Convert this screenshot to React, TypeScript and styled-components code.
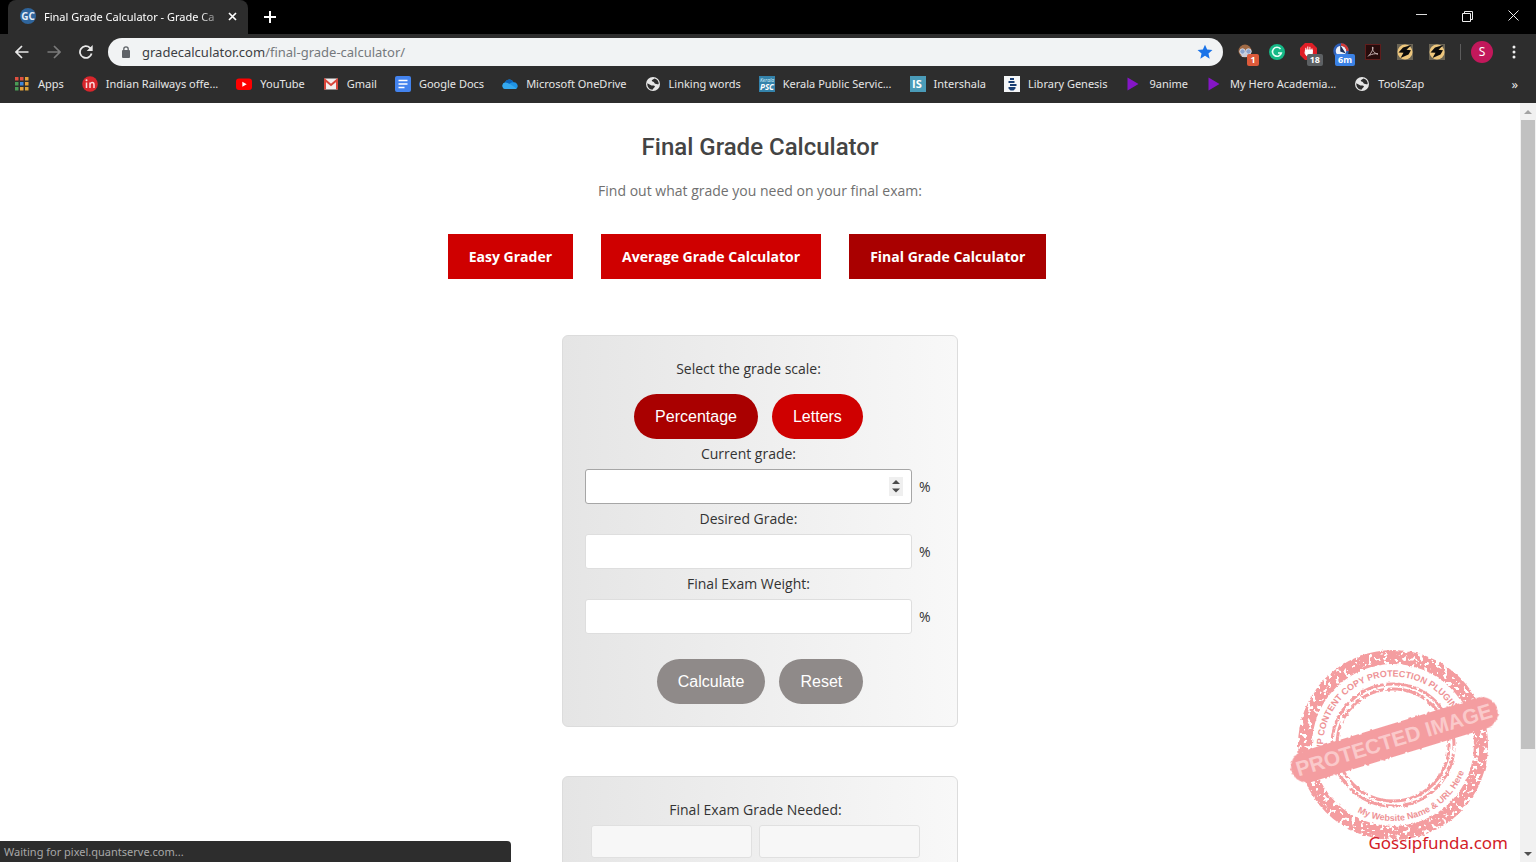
import React from "react";
import styled, { createGlobalStyle } from "styled-components";

const ui = `"Noto Sans", "Open Sans", sans-serif`;
const body = `"Open Sans", "Noto Sans", sans-serif`;

const Global = createGlobalStyle`
  * { box-sizing: border-box; }
  html, body { margin: 0; background: #fff; }
  button, input { font: inherit; margin: 0; }
  button { border: 0; padding: 0; background: none; color: inherit; }
  a { color: inherit; text-decoration: none; }
  svg { display: block; flex: none; }
`;

const Window = styled.div`
  position: relative;
  display: flex;
  flex-direction: column;
  height: 100vh;
  overflow: hidden;
  font-family: ${body};
`;

const TitleBar = styled.div`
  display: flex;
  flex: none;
  height: 34px;
  padding-left: 8px;
  background: #000;
  color: #fff;
  font-family: ${ui};
`;

const Tab = styled.div`
  display: flex;
  align-items: center;
  width: 240px;
  padding: 0 10px 2px 12px;
  border-radius: 8px 8px 0 0;
  background: #2d2d2d;
  font-size: 11px;
`;

const Favicon = styled.span`
  display: grid;
  place-items: center;
  flex: none;
  width: 16px;
  height: 16px;
  margin-right: 8px;
  border-radius: 50%;
  background: #2f659c;
  color: #e4eef8;
  font: 700 10px "Open Sans", sans-serif;
`;

const TabTitle = styled.span`
  flex: 1;
  overflow: hidden;
  white-space: nowrap;
  mask-image: linear-gradient(90deg, #000 85%, transparent);
`;

const IconButton = styled.button<{ $w?: number }>`
  display: grid;
  place-items: center;
  flex: none;
  width: ${(p) => p.$w ?? 32}px;
  height: 100%;
`;

const WindowControls = styled.div`
  display: flex;
  margin-left: auto;
`;

const Toolbar = styled.div`
  display: flex;
  align-items: center;
  flex: none;
  height: 36px;
  padding: 0 6px;
  background: #2d2d2d;
  color: #fff;
  font-family: ${ui};
`;

const Address = styled.div`
  display: flex;
  align-items: center;
  flex: 1;
  height: 28px;
  margin: 0 6px;
  padding: 0 10px 0 12px;
  border-radius: 14px;
  background: #f1f3f4;
  color: #5f6368;
`;

const Url = styled.a`
  flex: 1;
  margin-left: 10px;
  color: #75797d;
  font-size: 13px;
  b { color: #3c4043; font-weight: 400; }
`;

const Extension = styled.button`
  position: relative;
  display: grid;
  place-items: center;
  flex: none;
  width: 32px;
  height: 28px;
`;

const Badge = styled.span<{ $bg: string }>`
  position: absolute;
  right: 2px;
  bottom: 0;
  min-width: 12px;
  padding: 0 3px;
  border-radius: 2px;
  background: ${(p) => p.$bg};
  font: 700 9px/12px ${body};
  color: #fff;
`;

const Separator = styled.span`
  width: 1px;
  height: 16px;
  margin: 0 10px 0 7px;
  background: #5c5c5c;
`;

const Avatar = styled.button`
  width: 22px;
  height: 22px;
  margin-right: 5px;
  border-radius: 50%;
  background: #c2185b;
  color: #fff;
  font-size: 12px;
  line-height: 22px;
`;

const Bookmarks = styled.nav`
  display: flex;
  align-items: center;
  gap: 18px;
  flex: none;
  height: 33px;
  padding: 0 18px 6px 14px;
  background: #2d2d2d;
  color: #e6e6e6;
  font: 11px ${ui};
  white-space: nowrap;
`;

const Bookmark = styled.a`
  display: flex;
  align-items: center;
  gap: 8px;
`;

const More = styled.button`
  margin-left: auto;
  font-size: 13px;
`;

const Viewport = styled.div`
  display: flex;
  flex: 1;
  min-height: 0;
`;

const Page = styled.main`
  display: flex;
  flex-direction: column;
  align-items: center;
  flex: 1;
  overflow: hidden;
  color: #333;
  font-size: 14px;
`;

const Title = styled.h1`
  margin: 28px 0 0;
  color: #444;
  font: 500 24px/32px Roboto, sans-serif;
`;

const Lead = styled.p`
  margin: 18px 0 0;
  color: #707070;
  line-height: 20px;
`;

const Links = styled.nav`
  display: flex;
  gap: 28px;
  margin: 33px 0 56px;
  padding-right: 26px;
`;

const LinkButton = styled.a<{ $active?: boolean }>`
  padding: 0 21px;
  background: ${(p) => (p.$active ? "#a90000" : "#cf0000")};
  color: #fff;
  font-weight: 700;
  line-height: 45px;
`;

const Card = styled.form`
  flex: none;
  width: 396px;
  margin-bottom: 49px;
  padding: 18px 22px 22px;
  border: 1px solid #dcdcdc;
  border-radius: 6px;
  background: linear-gradient(90deg, #e5e5e5, #f8f8f8);
`;

const Column = styled.div`
  width: 327px;
  text-align: center;
`;

const Caption = styled.div`
  line-height: 30px;
  text-align: center;
`;

const Pills = styled.div`
  display: flex;
  justify-content: center;
  gap: 14px;
`;

const ScalePills = styled(Pills)`
  margin-top: 10px;
`;

const ActionPills = styled(Pills)`
  margin-top: 25px;
`;

const Pill = styled.button<{ $bg: string }>`
  height: 45px;
  padding: 0 21px;
  border-radius: 23px;
  background: ${(p) => p.$bg};
  color: #fff;
  font: 16px "Liberation Sans", Arial, sans-serif;
`;

const FieldLabel = styled.label`
  display: block;
  line-height: 30px;
`;

const FieldRow = styled.div`
  position: relative;
  display: flex;
  align-items: center;
  gap: 7px;
  width: 350px;
`;

const NumberInput = styled.input<{ $focused?: boolean }>`
  width: 327px;
  flex: none;
  height: 35px;
  padding: 0 8px;
  border: 1px solid ${(p) => (p.$focused ? "#a6a6a6" : "#dedede")};
  border-radius: 3px;
  background: #fff;
  outline: 0;
  appearance: textfield;
`;

const Stepper = styled.button`
  position: absolute;
  top: 8px;
  left: 304px;
  display: grid;
  place-items: center;
  width: 14px;
  height: 19px;
  background: #efefef;
`;

const Results = styled.div`
  display: flex;
  justify-content: center;
  gap: 7px;
`;

const ResultBlock = styled.div`
  padding-right: 9px;
`;

const Output = styled.input`
  width: 161px;
  height: 33px;
  border: 1px solid #e0e0e0;
  border-radius: 3px;
  background: #f7f7f7;
`;

const Scrollbar = styled.div`
  display: flex;
  flex-direction: column;
  flex: none;
  width: 16px;
  padding: 0 1px;
  background: #f1f1f1;
`;

const Thumb = styled.div`
  flex: 1;
  background: #c1c1c1;
`;

const Rest = styled.div`
  flex: 0 0 96px;
`;

const ScrollArrow = styled.button`
  display: grid;
  place-items: center;
  flex: none;
  height: 17px;
`;

const Status = styled.div`
  position: absolute;
  left: 0;
  bottom: 0;
  width: 511px;
  height: 21px;
  padding-left: 4px;
  border-radius: 0 4px 0 0;
  background: #2d2d2d;
  color: #a8a8a8;
  font: 11px/22px ${ui};
`;

const Watermark = styled.div`
  position: absolute;
  right: 28px;
  bottom: 6px;
  display: flex;
  flex-direction: column;
  align-items: flex-end;
`;

const SiteName = styled.span`
  margin-top: -15px;
  color: #d32027;
  font: 17px/27px ${ui};
`;

const StampArt = styled.svg`
  margin-right: 8px;
`;

const Globe = () => (
  <svg width="16" height="16" viewBox="0 0 16 16">
    <circle cx="8" cy="8" r="7" fill="#e6e6e6" />
    <path d="M2.300 7.300 6.500 9.500c1.500.3 2.500-.5 3.500.7-.5 1.600-1.800 1.900-2.500 3.500C4.500 13.700 2.300 11 2.300 8zM9.500 2.500 6.800 4.300c-.3 1.600 1.600 1.100 2.200 2 .5 1 1.200 1.700 2.200 1.600 1-.1 1.600.8 2.500.2.300-2.800-1.500-5-4.200-5.600z" fill="#2d2d2d" />
  </svg>
);

const Play = () => (
  <svg width="16" height="16" viewBox="0 0 16 16"><path d="M2.500 1.500v13l11-6.500z" fill="#8516c7" /></svg>
);

const Apps = () => (
  <svg width="16" height="16" viewBox="0 0 16 16">
    {["#e0503f", "#e0503f", "#e5a13a", "#4a9c56", "#3f86d8", "#e5a13a", "#4a9c56", "#e5a13a", "#d9a33a"].map((c, i) => (
      <rect key={i} x={1 + (i % 3) * 5} y={1 + Math.floor(i / 3) * 5} width="3.500" height="3.500" fill={c} />
    ))}
  </svg>
);

const bookmarks: { label: string; icon: React.ReactNode }[] = [
  { label: "Apps", icon: <Apps /> },
  {
    label: "Indian Railways offe...",
    icon: (
      <svg width="16" height="16" viewBox="0 0 16 16">
        <circle cx="8" cy="8" r="7.800" fill="#d8262c" />
        <path d="M4.500 6.500v5.500M8 12V6.500M8 8.500c.5-2.600 4-2.600 4 .2V12" fill="none" stroke="#fbdcdc" strokeWidth="1.500" />
        <circle cx="4.500" cy="4.300" r="1" fill="#fbdcdc" />
      </svg>
    ),
  },
  {
    label: "YouTube",
    icon: (
      <svg width="16" height="16" viewBox="0 0 16 16">
        <rect y="2.500" width="16" height="11.500" rx="3" fill="#f00" />
        <path d="M6.300 5.700v5l4.400-2.500z" fill="#fff" />
      </svg>
    ),
  },
  {
    label: "Gmail",
    icon: (
      <svg width="16" height="16" viewBox="0 0 16 16">
        <rect x="1" y="2.500" width="14" height="11" rx="1" fill="#f3eeee" />
        <path d="M2 13.500V4l6 5 6-5v9.500" fill="none" stroke="#d9463b" strokeWidth="2" />
      </svg>
    ),
  },
  {
    label: "Google Docs",
    icon: (
      <svg width="16" height="16" viewBox="0 0 16 16">
        <rect width="16" height="16" rx="2" fill="#4383ee" />
        <path d="M3.500 4.500h9M3.500 8h9M3.500 11.500h6" stroke="#fff" strokeWidth="1.600" />
      </svg>
    ),
  },
  {
    label: "Microsoft OneDrive",
    icon: (
      <svg width="16" height="16" viewBox="0 0 16 16">
        <path d="M3.500 13a3.300 3.300 0 0 1-.5-6.500C4.500 3 9.500 2.200 11.500 6.200c4-.2 5.500 4.500 3 6.300-.6.500-1.500.5-2 .5z" fill="#1f93e5" />
        <path d="M3.500 13a3.300 3.300 0 0 1-.5-6.500c1.500-.4 3 .2 4.500 1.300l7.200 4.700c-.7.500-1.700.5-2.200.5z" fill="#35a8ee" />
        <path d="M3 6.500C4.500 3 9.500 2.200 11.500 6.200 9.500 6 8.500 7 7.500 7.800 6 6.700 4.500 6.100 3 6.500z" fill="#0b62b8" />
      </svg>
    ),
  },
  { label: "Linking words", icon: <Globe /> },
  {
    label: "Kerala Public Servic...",
    icon: (
      <svg width="16" height="16" viewBox="0 0 16 16">
        <rect width="16" height="16" fill="#3483ab" />
        <text x="1" y="6" fontSize="5" fontStyle="italic" fill="#d6f0fa" fontFamily="Open Sans">Kerala</text>
        <text x="1" y="14" fontSize="8" fontWeight="700" fontStyle="italic" fill="#fff" fontFamily="Open Sans">PSC</text>
      </svg>
    ),
  },
  {
    label: "Intershala",
    icon: (
      <svg width="16" height="16" viewBox="0 0 16 16">
        <rect width="16" height="16" fill="#4a9bb8" />
        <text x="2" y="12" fontSize="11" fontWeight="700" fill="#fff" fontFamily="Open Sans">IS</text>
      </svg>
    ),
  },
  {
    label: "Library Genesis",
    icon: (
      <svg width="16" height="16" viewBox="0 0 16 16">
        <rect width="16" height="16" fill="#f4f6f8" />
        <path d="M6 2h4v2H6zM4.500 5h6v2h-6zM6 8h6.500v2H6zM4.500 11h7v1.500l-2 2h-3l-2-2z" fill="#173d73" />
      </svg>
    ),
  },
  { label: "9anime", icon: <Play /> },
  { label: "My Hero Academia...", icon: <Play /> },
  { label: "ToolsZap", icon: <Globe /> },
];

const Bolt = () => (
  <svg width="18" height="18" viewBox="0 0 18 18">
    <rect x="1" y="1" width="16" height="16" fill="#6a6455" />
    <circle cx="9" cy="9" r="7.500" fill="#edc67c" />
    <path d="M15.500 2 7 4.500 2.500 9.500l5 .3L4.500 15l8-3.500L15 7.200l-4.500-.5z" fill="#0b0b0b" />
  </svg>
);

const Stamp = () => (
  <StampArt width="212" height="198" viewBox="0 0 212 198" role="img" aria-label="Protected image">
    <defs>
      <filter id="grain" x="-5%" y="-5%" width="110%" height="110%">
        <feTurbulence type="fractalNoise" baseFrequency="0.25" numOctaves="3" seed="4" result="n" />
        <feColorMatrix in="n" type="matrix" values="0 0 0 0 0  0 0 0 0 0  0 0 0 0 0  0 0 0 -16 10.300" result="m" />
        <feDisplacementMap in="SourceGraphic" in2="n" scale="3" xChannelSelector="R" yChannelSelector="G" result="d" />
        <feComposite in="d" in2="m" operator="in" />
      </filter>
      <filter id="rough" x="-5%" y="-10%" width="110%" height="120%">
        <feTurbulence type="fractalNoise" baseFrequency="0.3" numOctaves="2" seed="9" result="n" />
        <feDisplacementMap in="SourceGraphic" in2="n" scale="3" xChannelSelector="R" yChannelSelector="G" />
      </filter>
      <path id="arcTop" d="M35.300 107A70 70 0 1 1 174.700 107" />
      <path id="arcBottom" d="M69.300 166.100A76 76 0 0 0 179.800 112.200" />
    </defs>
    <g fill="none" stroke="#f49da0">
      <circle cx="105" cy="99" r="88" strokeWidth="14" filter="url(#grain)" />
      <circle cx="105" cy="99" r="61" strokeWidth="3" filter="url(#grain)" />
      <circle cx="105" cy="99" r="56" strokeWidth="3" filter="url(#grain)" />
    </g>
    <g fill="#ee9396" fontFamily="Liberation Sans, Arial, sans-serif" fontWeight="700">
      <text fontSize="9"><textPath href="#arcTop">WP CONTENT COPY PROTECTION PLUGIN</textPath></text>
      <text fontSize="9"><textPath href="#arcBottom">My Website Name &amp; URL Here</textPath></text>
    </g>
    <g transform="rotate(-17 106 94)">
      <rect x="-1" y="78" width="215" height="32" rx="16" fill="#f49da0" filter="url(#rough)" />
      <text x="106" y="101" textAnchor="middle" fontSize="21" fontWeight="700" fill="#fac9ca" fontFamily="Liberation Sans, Arial, sans-serif">PROTECTED IMAGE</text>
    </g>
  </StampArt>
);

const fields = [
  { id: "current", label: "Current grade:", focused: true },
  { id: "desired", label: "Desired Grade:" },
  { id: "weight", label: "Final Exam Weight:" },
];

export default function App() {
  return (
    <Window>
      <Global />
      <TitleBar>
        <Tab>
          <Favicon>GC</Favicon>
          <TabTitle>Final Grade Calculator - Grade Ca</TabTitle>
          <IconButton $w={12} aria-label="Close tab">
            <svg width="9" height="9" viewBox="0 0 9 9"><path d="m1 1 7 7M8 1 1 8" stroke="#fff" strokeWidth="1.700" /></svg>
          </IconButton>
        </Tab>
        <IconButton $w={44} aria-label="New tab">
          <svg width="12" height="12" viewBox="0 0 12 12"><path d="M6 0v12M0 6h12" stroke="#fff" strokeWidth="2" /></svg>
        </IconButton>
        <WindowControls>
          <IconButton $w={46} aria-label="Minimize">
            <svg width="11" height="11" viewBox="0 0 11 11"><path d="M0 2.500h11" stroke="#ddd" /></svg>
          </IconButton>
          <IconButton $w={46} aria-label="Restore">
            <svg width="11" height="15" viewBox="0 0 11 15"><path d="M.5 3.500h8v8h-8zM2.500 3V1.500h8v8H9" fill="none" stroke="#eee" /></svg>
          </IconButton>
          <IconButton $w={46} aria-label="Close">
            <svg width="11" height="15" viewBox="0 0 11 15"><path d="m.5.5 10 10M10.500.5l-10 10" stroke="#eee" /></svg>
          </IconButton>
        </WindowControls>
      </TitleBar>

      <Toolbar>
        <IconButton aria-label="Back">
          <svg width="14" height="14" viewBox="0 0 14 14"><path d="M13.500 7H1.500M7 1 1 7l6 6" fill="none" stroke="#e8e8e8" strokeWidth="1.700" /></svg>
        </IconButton>
        <IconButton aria-label="Forward">
          <svg width="14" height="14" viewBox="0 0 14 14"><path d="M.5 7h12M7 1l6 6-6 6" fill="none" stroke="#7a7a7a" strokeWidth="1.700" /></svg>
        </IconButton>
        <IconButton aria-label="Reload">
          <svg width="14" height="14" viewBox="0 0 14 14"><path d="M12.600 8.500A5.900 5.900 0 1 1 11 2.800L12 4" fill="none" stroke="#e8e8e8" strokeWidth="1.800" /><path d="M13.700 0v6H7.700z" fill="#e8e8e8" /></svg>
        </IconButton>
        <Address>
          <svg width="12" height="14" viewBox="0 0 12 14"><rect x="2" y="5" width="8" height="8" rx="1" fill="#5f6368" /><path d="M3.800 5.500V4a2.200 2.200 0 0 1 4.400 0v1.500" fill="none" stroke="#5f6368" strokeWidth="1.300" /></svg>
          <Url href="#"><b>gradecalculator.com</b>/final-grade-calculator/</Url>
          <svg width="16" height="16" viewBox="0 0 24 24"><path d="m12 1 3.200 7.300 8 .7-6 5.200 1.800 7.800-7-4.200L5 22l1.800-7.800-6-5.200 8-.7z" fill="#1a73e8" /></svg>
        </Address>
        <Extension aria-label="Extension with 1 alert">
          <svg width="18" height="18" viewBox="0 0 18 18"><circle cx="9" cy="8" r="6.500" fill="#a06a45" /><path d="M4 9h10l-1 5H6z" fill="#c9ccd6" /><circle cx="6.500" cy="8.500" r="2.700" fill="#8ba3cc" stroke="#d6dbe6" /><circle cx="12.500" cy="8.500" r="2.700" fill="#8ba3cc" stroke="#d6dbe6" /></svg>
          <Badge $bg="#dd5a3a">1</Badge>
        </Extension>
        <Extension aria-label="Grammarly">
          <svg width="18" height="18" viewBox="0 0 18 18"><circle cx="9" cy="9" r="8" fill="#15b886" /><path d="M12.500 6A4.500 4.500 0 1 0 13.300 10H10" fill="none" stroke="#e8fff7" strokeWidth="1.600" /></svg>
        </Extension>
        <Extension aria-label="Ad blocker">
          <svg width="20" height="20" viewBox="0 0 20 20"><path d="M6 1h7l5 5v7l-5 5H6l-5-5V6z" fill="#e01e26" /><path d="M6.800 9V5.800M8.800 9V4.500M10.900 9V4.800M13 10V6.500M6.500 8h6.800v3c0 2.500-1.500 3.500-3.500 3.500S7 13.500 6 11z" fill="#fff" stroke="#fff" /></svg>
          <Badge $bg="#5d6164">18</Badge>
        </Extension>
        <Extension aria-label="Timer">
          <svg width="18" height="18" viewBox="0 0 18 18"><circle cx="9" cy="8" r="6.500" fill="#eef2fa" stroke="#2e5fb7" strokeWidth="2.500" /><path d="M9 1.500A6.500 6.500 0 0 1 15.500 8" fill="none" stroke="#d33a34" strokeWidth="2.500" /><path d="M9 8V4.500L12 9z" stroke="#1b2c55" strokeWidth="1.500" /></svg>
          <Badge $bg="#3b82e6">6m</Badge>
        </Extension>
        <Extension aria-label="Acrobat">
          <svg width="16" height="16" viewBox="0 0 16 16"><rect x=".5" y=".5" width="15" height="15" fill="#260c0c" stroke="#5f1d1c" /><path d="M7.500 3c1.500 0 0 5-4.500 9.500M7.500 3c-.5 3 1.500 6.500 5.500 7-3-.8-6 .2-8.500 1.200" fill="none" stroke="#c9b5b5" /></svg>
        </Extension>
        <Extension aria-label="Bolt"><Bolt /></Extension>
        <Extension aria-label="Bolt"><Bolt /></Extension>
        <Separator />
        <Avatar>S</Avatar>
        <IconButton aria-label="Menu">
          <svg width="4" height="14" viewBox="0 0 4 14"><circle cx="2" cy="2" r="1.500" fill="#eee" /><circle cx="2" cy="7" r="1.500" fill="#eee" /><circle cx="2" cy="12" r="1.500" fill="#eee" /></svg>
        </IconButton>
      </Toolbar>

      <Bookmarks>
        {bookmarks.map((b) => (
          <Bookmark key={b.label} href="#">{b.icon}{b.label}</Bookmark>
        ))}
        <More aria-label="More bookmarks">»</More>
      </Bookmarks>

      <Viewport>
        <Page>
          <Title>Final Grade Calculator</Title>
          <Lead>Find out what grade you need on your final exam:</Lead>
          <Links>
            <LinkButton href="#">Easy Grader</LinkButton>
            <LinkButton href="#">Average Grade Calculator</LinkButton>
            <LinkButton href="#" $active>Final Grade Calculator</LinkButton>
          </Links>
          <Card>
            <Column>
              <Caption>Select the grade scale:</Caption>
              <ScalePills>
                <Pill type="button" $bg="#a90000">Percentage</Pill>
                <Pill type="button" $bg="#cf0000">Letters</Pill>
              </ScalePills>
              {fields.map((f) => (
                <div key={f.id}>
                  <FieldLabel htmlFor={f.id}>{f.label}</FieldLabel>
                  <FieldRow>
                    <NumberInput id={f.id} type="number" $focused={f.focused} />%
                    {f.focused && (
                      <Stepper type="button" aria-label="Change value">
                        <svg width="8" height="13" viewBox="0 0 8 13"><path d="M4 0 8 4H0zM0 8.500h8l-4 4z" fill="#4a4a4a" /></svg>
                      </Stepper>
                    )}
                  </FieldRow>
                </div>
              ))}
            </Column>
            <ActionPills>
              <Pill type="button" $bg="#8f8a89">Calculate</Pill>
              <Pill type="button" $bg="#8f8a89">Reset</Pill>
            </ActionPills>
          </Card>
          <Card>
            <ResultBlock>
              <Caption>Final Exam Grade Needed:</Caption>
              <Results>
                <Output aria-label="Grade needed" readOnly />
                <Output aria-label="Letter needed" readOnly />
              </Results>
            </ResultBlock>
          </Card>
        </Page>
        <Scrollbar>
          <ScrollArrow aria-label="Scroll up"><svg width="8" height="4" viewBox="0 0 8 4"><path d="M4 0 8 4H0z" fill="#a3a3a3" /></svg></ScrollArrow>
          <Thumb />
          <Rest />
          <ScrollArrow aria-label="Scroll down"><svg width="8" height="4" viewBox="0 0 8 4"><path d="M0 0h8L4 4z" fill="#505050" /></svg></ScrollArrow>
        </Scrollbar>
      </Viewport>

      <Status>Waiting for pixel.quantserve.com...</Status>
      <Watermark>
        <Stamp />
        <SiteName>Gossipfunda.com</SiteName>
      </Watermark>
    </Window>
  );
}
